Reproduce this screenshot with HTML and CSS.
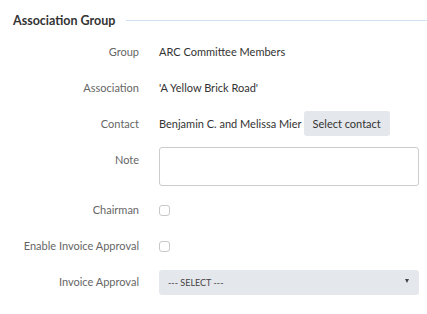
FILE: index.html
```html
<!DOCTYPE html>
<html>
<head>
<meta charset="utf-8">
<link rel="stylesheet" href="styles.css">
</head>
<body>
<section class="group">
  <div class="legend"><h2>Association Group</h2><span class="rule"></span></div>
  <div class="form">
    <div class="label">Group</div>
    <div class="value">ARC Committee Members</div>

    <div class="label">Association</div>
    <div class="value">'A Yellow Brick Road'</div>

    <div class="label">Contact</div>
    <div class="value contact"><span>Benjamin C. and Melissa Mier</span><button class="btn">Select contact</button></div>

    <div class="label">Note</div>
    <div class="value"><textarea class="note"></textarea></div>

    <div class="label">Chairman</div>
    <div class="value"><span class="check"></span></div>

    <div class="label">Enable Invoice Approval</div>
    <div class="value"><span class="check"></span></div>

    <div class="label">Invoice Approval</div>
    <div class="value"><div class="select"><span>--- SELECT ---</span><span class="caret"></span></div></div>
  </div>
</section>
</body>
</html>
```
FILE: styles.css
```css
* { box-sizing: border-box; }
body {
  margin: 0;
  background: #fff;
  font-family: Lato, "Noto Sans", sans-serif;
  font-size: 11px;
  color: #333;
}
.group { padding: 8px 0 0 13px; }
.legend {
  display: flex;
  align-items: center;
  height: 24px;
}
.legend h2 {
  margin: 0;
  font-size: 12.5px;
  font-weight: 700;
  color: #333;
}
.rule {
  flex: 1;
  height: 1px;
  background: #cfe1f3;
  margin-left: 11px;
}
.form {
  display: grid;
  grid-template-columns: 126px 260px;
  column-gap: 20px;
  row-gap: 11px;
  margin-top: 7px;
  align-items: start;
}
.label {
  text-align: right;
  line-height: 25px;
  color: #666;
  white-space: nowrap;
}
.value {
  line-height: 25px;
  min-height: 25px;
  display: flex;
  align-items: center;
  white-space: nowrap;
}
.contact span { margin-right: 2px; }
.btn {
  font: inherit;
  color: #333;
  background: #e4e7eb;
  border: none;
  border-radius: 3px;
  height: 25px;
  padding: 0 9px;
  white-space: nowrap;
}
.note {
  display: block;
  width: 260px;
  height: 39px;
  border: 1px solid #ccc;
  border-radius: 3px;
  resize: none;
  background: #fff;
}
.check {
  width: 11px;
  height: 11px;
  border: 1px solid #c8c8c8;
  border-radius: 3px;
  margin-top: 1px;
}
.select {
  width: 260px;
  height: 25px;
  margin-top: 1px;
  background: #e4e7eb;
  border-radius: 3px;
  display: flex;
  align-items: center;
  justify-content: space-between;
  padding: 0 10px 0 9px;
  font-size: 9px;
  color: #444;
}
.caret {
  width: 0;
  height: 0;
  border-left: 2.5px solid transparent;
  border-right: 2.5px solid transparent;
  border-top: 4px solid #444;
  margin-top: -3px;
}
```
